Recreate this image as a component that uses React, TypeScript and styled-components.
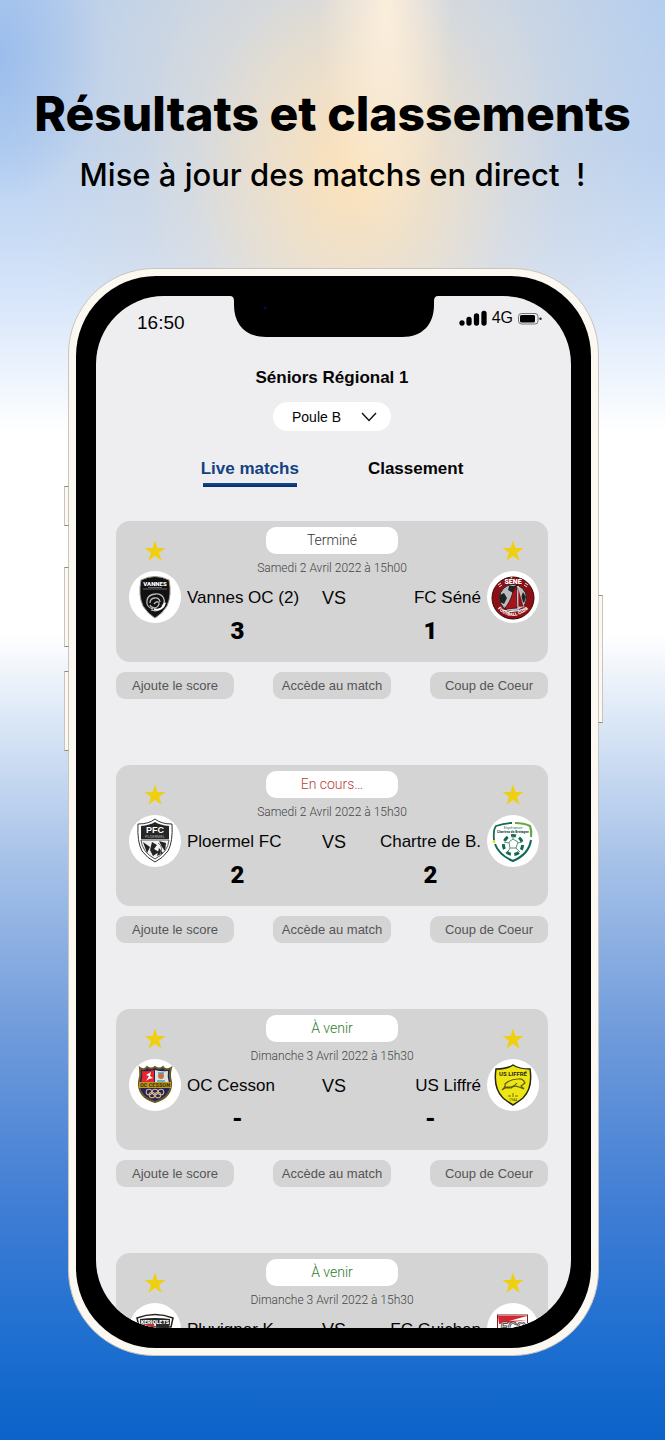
import React from 'react';
import styled, { createGlobalStyle } from 'styled-components';

const SANS = '"Liberation Sans", Arial, Helvetica, sans-serif';
const THIN = 'Roboto, "Liberation Sans", sans-serif';

const GlobalStyle = createGlobalStyle`
  *, *::before, *::after { box-sizing: border-box; }
  body { margin: 0; font-family: ${SANS}; color: #050505; }
  h1, h2, p, ul { margin: 0; padding: 0; }
  button, select { font: inherit; color: inherit; border: 0; margin: 0; padding: 0; cursor: pointer; }
`;

const Page = styled.main`
  min-height: 100vh;
  padding: 86px 0 85px;
  overflow: hidden;
  background:
    radial-gradient(ellipse 16% 10% at 0% 4%, rgba(140, 178, 232, 0.6), transparent),
    radial-gradient(ellipse 10% 16% at 58% 1%, rgba(255, 240, 220, 0.9), transparent),
    radial-gradient(ellipse 32% 18% at 53% 12%, rgba(255, 226, 182, 0.95), rgba(251, 228, 193, 0.6) 40%, rgba(240, 228, 210, 0.2) 75%, transparent),
    radial-gradient(ellipse 52% 26% at 52% 6%, rgba(216, 216, 214, 0.95), rgba(216, 218, 220, 0.7) 50%, transparent),
    linear-gradient(180deg, #b2cdf0 0%, #b6d0f2 10%, #cbddf6 17%, #dce9fb 22%, #fff 30%, #fff 44%, #dbe7f6 50%, #a5c1e8 60%, #6e9adb 72%, #3f7dd4 84%, #1e6fd0 93%, #0b62c8 100%);
`;

const Intro = styled.header`
  display: flex;
  flex-direction: column;
  align-items: center;
  gap: 13px;
  text-align: center;
`;

const Headline = styled.h1`
  font: 800 48px/56px Inter, "Open Sans", sans-serif;
  color: #000;
  white-space: nowrap;
`;

const Tagline = styled.p`
  font: 500 31px/40px Inter, "Open Sans", sans-serif;
  color: #000;
  white-space: pre;
`;

const Phone = styled.section`
  position: relative;
  margin: 73px 66px 0 68px;
  padding: 7px;
  border-radius: 86px;
  background: #fbf8f2;
  border: 1px solid #c9c4bd;
`;

const Bezel = styled.div`
  padding: 20px;
  border-radius: 80px;
  background: #000;
`;

const SideKey = styled.span<{ $side: 'left' | 'right'; $top: number; $length: number }>`
  position: absolute;
  ${({ $side }) => $side}: -5px;
  top: ${({ $top }) => $top}%;
  height: ${({ $length }) => $length}%;
  width: 5px;
  background: #fbf8f2;
  border: 1px solid #c9c4bd;
  border-top-color: #8f8b85;
  border-bottom-color: #8f8b85;
`;

const Screen = styled.div`
  position: relative;
  aspect-ratio: 475 / 1032;
  overflow: hidden;
  border-radius: 68px;
  background: #eeeef0;
`;

const Notch = styled.svg`
  position: absolute;
  top: 0;
  left: 50%;
  width: 208px;
  height: 41px;
  transform: translateX(-50%);
`;

const StatusBar = styled.div`
  display: flex;
  align-items: flex-start;
  justify-content: space-between;
  height: 70px;
  padding: 12px 29px 0 41px;
`;

const Clock = styled.time`
  font-size: 19px;
  line-height: 30px;
`;

const Signals = styled.div`
  display: flex;
  align-items: center;
  gap: 5px;
  font-size: 16px;
  line-height: 20px;
`;

const Toolbar = styled.header`
  display: flex;
  flex-direction: column;
  align-items: center;
  padding-right: 3px;
`;

const Division = styled.h2`
  font-size: 17px;
  line-height: 24px;
`;

const PoolPicker = styled.label`
  position: relative;
  display: block;
  margin-top: 12px;
  svg { position: absolute; right: 13px; top: 9px; pointer-events: none; }
`;

const PoolSelect = styled.select`
  appearance: none;
  display: block;
  width: 118px;
  height: 29px;
  padding: 0 36px 0 19px;
  border-radius: 15px;
  background: #fff;
  font-size: 14px;
  line-height: 28px;
`;

const Tabs = styled.nav`
  display: flex;
  gap: 69px;
  margin-top: 25px;
`;

const Tab = styled.button<{ $active?: boolean }>`
  height: 31px;
  background: linear-gradient(#164a8c, #0a2a6c) center bottom / ${({ $active }) => ($active ? '94px 4px' : '0 0')} no-repeat;
  color: ${({ $active }) => ($active ? '#124282' : '#050505')};
  font-weight: 700;
  font-size: 17px;
  line-height: 26px;
  padding-bottom: 5px;
`;

const MatchList = styled.ul`
  display: flex;
  flex-direction: column;
  gap: 66px;
  margin-top: 34px;
  padding: 0 23px 0 20px;
  list-style: none;
`;

const MatchItem = styled.li`
  display: flex;
  flex-direction: column;
  gap: 10px;
`;

const Card = styled.article`
  display: grid;
  grid-template-columns: 52px 1fr 52px;
  gap: 6px;
  height: 141px;
  padding: 6px 9px 0 13px;
  border-radius: 14px;
  background: #d4d4d5;
`;

const Side = styled.div`
  display: flex;
  flex-direction: column;
  align-items: center;
  gap: 9px;
  padding-top: 13px;
`;

const StarButton = styled.button`
  display: block;
  width: 22px;
  height: 22px;
  background: none;
  svg { display: block; }
`;

const Crest = styled.div`
  width: 52px;
  height: 52px;
  border-radius: 50%;
  background: #fff;
  svg { display: block; width: 52px; height: 52px; }
`;

const Summary = styled.div`
  display: flex;
  flex-direction: column;
  min-width: 0;
`;

const Schedule = styled.div`
  display: flex;
  flex-direction: column;
  align-items: center;
  gap: 5px;
  padding-right: 4px;
`;

const State = styled.span<{ $color: string }>`
  width: 132px;
  border-radius: 10px;
  background: #fff;
  color: ${({ $color }) => $color};
  font: 300 14px/27px ${THIN};
  text-align: center;
`;

const When = styled.time`
  color: #444;
  font: 300 12px/18px ${THIN};
  white-space: nowrap;
`;

const Teams = styled.div`
  display: flex;
  align-items: center;
  margin-top: 9px;
  line-height: 24px;
`;

const Team = styled.span<{ $away?: boolean }>`
  flex: 1 1 0;
  font-size: 17px;
  white-space: nowrap;
  text-align: ${({ $away }) => ($away ? 'right' : 'left')};
`;

const Versus = styled.span`
  font-size: 18px;
`;

const Scores = styled.div`
  display: flex;
  justify-content: space-between;
  margin-top: 7px;
`;

const Score = styled.strong`
  width: 101px;
  color: #000;
  font: 900 24px/28px Roboto, "Liberation Sans", sans-serif;
  text-align: center;
`;

const Actions = styled.div`
  display: flex;
  justify-content: space-between;
`;

const Action = styled.button`
  width: 118px;
  height: 27px;
  border-radius: 9px;
  background: #d4d4d5;
  color: #555;
  font-size: 13px;
  line-height: 27px;
`;

const Star = () => (
  <svg width="22" height="22" viewBox="0 0 22 22" aria-hidden="true">
    <path d="M11 .5 13.5 8H21.500L15.100 12.700 17.500 20.700 11 15.900 4.500 20.700 6.900 12.700.5 8H8.500Z" fill="#efcf12" />
  </svg>
);

const crests: Record<string, React.ReactNode> = {
  vannes: (
    <>
      <path d="M12 9Q26 2 40 9Q43 24 38 35Q33 43 26 47Q19 43 14 35Q9 24 12 9Z" fill="#111" stroke="#9d958c" />
      <text x="26" y="14.500" textAnchor="middle" fontSize="6" fontWeight="900" fill="#fff" fontFamily="Roboto">VANNES</text>
      <path d="M14 18H38M19 16.500H33" stroke="#777" strokeWidth=".8" />
      <path d="M24 38C15 36 16 24 26 23C34 22 38 30 33 35M21 32C21 26 30 25 31 31M25 33C28 29 32 31 29 35C27 38 22 37 21 34M36 31C34 39 28 41 22 39" fill="none" stroke="#bcbcbc" strokeWidth="1.300" />
      <path d="M25 38C31 40 35 36 36 32" fill="none" stroke="#fff" strokeWidth="1.800" />
    </>
  ),
  sene: (
    <>
      <circle cx="26" cy="27" r="21" fill="#8c0f14" stroke="#3c080a" />
      <circle cx="26" cy="27" r="13.500" fill="#b9bdc0" stroke="#222" />
      <path d="M22 15h7l2 3-5 4-5-3ZM13 24l4-2 3 5-3 6-4-2ZM36 21l3 5-2 6-4-3Z" fill="#202326" />
      <path d="M30 13Q29 25 30 37L17 38Q23 32 26 21Z" fill="#a4151b" stroke="#4a080b" strokeWidth=".8" />
      <path d="M31 15L37 36H31Z" fill="#911217" stroke="#eee" strokeWidth=".6" />
      <path d="M16 39Q26 42 37 38" fill="none" stroke="#eee" strokeWidth="1.200" />
      <text x="26" y="12.500" textAnchor="middle" fontSize="7" fontWeight="900" fill="#fff" fontFamily="Roboto">SÉNÉ</text>
      <path id="sene-arc" d="M9 36Q25 54 43 36" fill="none" />
      <text fontSize="4.500" fontWeight="900" fill="#fff" fontFamily="Roboto"><textPath href="#sene-arc" startOffset="50%" textAnchor="middle">FOOTBALL CLUB</textPath></text>
      <path d="M11 14l3-2M12 16l3-2M38 12l3 2M37 14l3 2" stroke="#ddd" />
    </>
  ),
  ploermel: (
    <>
      <path d="M9 9Q20 9 26 4Q32 9 43 9Q44 27 39 36Q34 43 26 47Q18 43 13 36Q8 27 9 9Z" fill="#fff" stroke="#333" />
      <path d="M12 11Q21 10 26 7Q31 10 40 11V24H12Z" fill="#252525" />
      <path d="M12 25Q13 37 26 44Q39 37 40 25Z" fill="#f1f1f1" stroke="#555" />
      <path d="M14 27l7 5-3 6ZM23 27l5 3-3 4 5 3-6 4-3-6ZM30 26l7 2-1 8-3-4ZM30 33l4 5-6 3Z" fill="#222" />
      <path d="M29 28Q35 32 31 39" stroke="#777" fill="none" />
      <text x="26" y="17.500" textAnchor="middle" fontSize="9" fontWeight="900" fill="#fff" fontFamily="Liberation Sans">PFC</text>
      <text x="26" y="22.500" textAnchor="middle" fontSize="4" fill="#aaa" fontFamily="Roboto">PLOERMEL</text>
    </>
  ),
  chartres: (
    <>
      <path d="M9 12Q26 5 43 12Q47 34 26 46Q5 34 9 12Z" fill="#fff" />
      <path d="M7 25Q6 15 9 11Q17 8 25 8" fill="none" stroke="#176952" strokeWidth="1.800" />
      <path d="M28 8Q37 8 43 11Q45 16 44 22" fill="none" stroke="#67a83b" strokeWidth="2.200" />
      <path d="M44 25Q42 39 26 46Q12 40 8 29" fill="none" stroke="#0b6a55" strokeWidth="2" />
      <path d="M7 25v3" stroke="#e8db32" strokeWidth="2.500" />
      <circle cx="26" cy="30" r="9.500" fill="none" stroke="#11674f" strokeWidth="3" strokeDasharray="5 3.500" />
      <path d="M22 27l4-3 5 3-2 6h-6ZM26 20v4M17 27l5 1M35 27l-4 1M23 33l-3 5M29 33l4 4" fill="none" stroke="#44896e" strokeWidth=".9" />
      <text x="26" y="14" textAnchor="middle" fontSize="4" fill="#357564" fontFamily="Roboto">Espérance</text>
      <text x="26" y="18" textAnchor="middle" fontSize="3.300" fontWeight="900" fill="#15594a" fontFamily="Roboto">Chartres de Bretagne</text>
    </>
  ),
  cesson: (
    <>
      <path d="M11 9Q15 12 18 8Q22 11 26 8Q30 11 34 8Q37 12 42 9Q40 16 42 23Q43 38 26 43Q9 38 10 23Q12 16 11 9Z" fill="#23235f" stroke="#6c5a1d" strokeWidth="2" />
      <path d="M13 12Q19 13 25 11V24H12Q14 18 13 12Z" fill="#e8252d" />
      <path d="M26 11Q32 13 39 12Q38 18 40 24H26Z" fill="#dae5d8" />
      <path d="M17 22l3-5-3-1 5-3-1 4 3 2-4 1Z" fill="#fff" />
      <circle cx="32" cy="17" r="3" fill="#ce6b4c" />
      <path d="M28 22h8M29 14h6" stroke="#4b9dae" strokeWidth="1.500" />
      <path d="M10 23H42V29H10Z" fill="#bd9a25" />
      <text x="26" y="28.200" textAnchor="middle" fontSize="5.500" fontWeight="900" fill="#42360d" fontFamily="Roboto">OC CESSON</text>
      <g fill="none" stroke="#d2b37d" strokeWidth="1.100"><circle cx="20" cy="33" r="2.800" /><circle cx="26" cy="33" r="2.800" /><circle cx="32" cy="33" r="2.800" /><circle cx="23" cy="36" r="2.800" /><circle cx="29" cy="36" r="2.800" /></g>
    </>
  ),
  liffre: (
    <>
      <path d="M9 10Q20 10 26 6Q32 10 43 10Q46 29 36 39Q31 43 26 46Q21 43 16 39Q6 29 9 10Z" fill="#eee515" stroke="#272711" strokeWidth="1.500" />
      <text x="26" y="17" textAnchor="middle" fontSize="6" fontWeight="700" fill="#292a13" fontFamily="Roboto">US LIFFRÉ</text>
      <path d="M15 31Q19 28 18 25Q23 20 31 20Q36 19 38 24L34 27L37 30L32 28Q27 26 24 29L18 29ZM18 28Q26 29 30 24" fill="none" stroke="#5d5b14" strokeWidth="1.200" />
      <path d="M21 37h3M28 37h3M26 34v4" stroke="#55520d" strokeWidth=".8" />
      <text x="26" y="42" textAnchor="middle" fontSize="3.500" fill="#45430d" fontFamily="Roboto">1944</text>
    </>
  ),
  pluvigner: (
    <>
      <path d="M8 15Q26 8 44 15L42 24H10Z" fill="#fff" stroke="#222" strokeWidth="1.500" />
      <path d="M11 16Q26 14 41 16V21H11Z" fill="#222" />
      <path d="M11 21h14l2 8H14Z" fill="#ba3435" />
      <path d="M27 21h14l-3 8H27Z" fill="#292929" />
      <text x="26" y="20.500" textAnchor="middle" fontSize="5.500" fontWeight="900" fill="#fff" fontFamily="Roboto">KERIOLETS</text>
    </>
  ),
  guichen: (
    <>
      <rect x="10.500" y="12" width="30" height="28" fill="#fff" stroke="#8e171d" />
      <path d="M11 13H40L22 18L40 17L12 21Z" fill="#d32630" />
      <text x="26" y="28" textAnchor="middle" fontSize="12" fontWeight="900" fontStyle="italic" fill="#ddd" stroke="#333" strokeWidth=".7" fontFamily="Liberation Sans">FCG</text>
    </>
  ),
};

const DONE = '#333';
const LIVE = '#b8413c';
const NEXT = '#2c7d2c';

const matches = [
  { state: 'Terminé', color: DONE, when: 'Samedi 2 Avril 2022 à 15h00', home: 'Vannes OC (2)', away: 'FC Séné', score: ['3', '1'], crests: ['vannes', 'sene'] },
  { state: 'En cours…', color: LIVE, when: 'Samedi 2 Avril 2022 à 15h30', home: 'Ploermel FC', away: 'Chartre de B.', score: ['2', '2'], crests: ['ploermel', 'chartres'] },
  { state: 'À venir', color: NEXT, when: 'Dimanche 3 Avril 2022 à 15h30', home: 'OC Cesson', away: 'US Liffré', score: ['-', '-'], crests: ['cesson', 'liffre'] },
  { state: 'À venir', color: NEXT, when: 'Dimanche 3 Avril 2022 à 15h30', home: 'Pluvigner K.', away: 'FC Guichen', score: ['-', '-'], crests: ['pluvigner', 'guichen'] },
];

const TeamSide = ({ team, crest }: { team: string; crest: string }) => (
  <Side>
    <StarButton aria-label={`Suivre ${team}`}><Star /></StarButton>
    <Crest><svg viewBox="0 0 52 52" aria-hidden="true">{crests[crest]}</svg></Crest>
  </Side>
);

const Match = ({ match }: { match: (typeof matches)[number] }) => (
  <MatchItem>
    <Card>
      <TeamSide team={match.home} crest={match.crests[0]} />
      <Summary>
        <Schedule>
          <State $color={match.color}>{match.state}</State>
          <When>{match.when}</When>
        </Schedule>
        <Teams>
          <Team>{match.home}</Team>
          <Versus>VS</Versus>
          <Team $away>{match.away}</Team>
        </Teams>
        <Scores>
          <Score>{match.score[0]}</Score>
          <Score>{match.score[1]}</Score>
        </Scores>
      </Summary>
      <TeamSide team={match.away} crest={match.crests[1]} />
    </Card>
    <Actions>
      <Action>Ajoute le score</Action>
      <Action>Accède au match</Action>
      <Action>Coup de Coeur</Action>
    </Actions>
  </MatchItem>
);

export default function App() {
  return (
    <>
      <GlobalStyle />
      <Page>
        <Intro>
          <Headline>Résultats et classements</Headline>
          <Tagline>{'Mise à jour des matchs en direct  !'}</Tagline>
        </Intro>
        <Phone>
          <SideKey $side="left" $top={20} $length={3.7} />
          <SideKey $side="left" $top={27.4} $length={7.4} />
          <SideKey $side="left" $top={37} $length={7.4} />
          <SideKey $side="right" $top={30} $length={11.8} />
          <Bezel>
            <Screen>
              <Notch viewBox="0 0 208 41" aria-hidden="true">
                <path d="M0 0Q4 0 4 5V9C4 28 15 41 36 41H172C193 41 204 28 204 9V5Q204 0 208 0Z" fill="#000" />
                <circle cx="35" cy="12" r="1.500" fill="#0a0845" />
              </Notch>
              <StatusBar>
                <Clock>16:50</Clock>
                <Signals>
                  <svg width="28" height="16" viewBox="0 0 28 16" aria-hidden="true">
                    <path d="M3 13v0M10 13v-3.500M17.500 13V6M25 13V3.500" stroke="#000" strokeWidth="5.300" strokeLinecap="round" />
                  </svg>
                  <span>4G</span>
                  <svg width="24" height="13" viewBox="0 0 24 13" aria-hidden="true">
                    <rect x=".5" y="1.500" width="19.500" height="10.500" rx="3" fill="none" stroke="#777" />
                    <rect x="2" y="3" width="15" height="7.500" rx="1.500" fill="#000" />
                    <circle cx="22.500" cy="6.800" r="1.200" fill="#222" />
                  </svg>
                </Signals>
              </StatusBar>
              <Toolbar>
                <Division>Séniors Régional 1</Division>
                <PoolPicker>
                  <PoolSelect aria-label="Poule" defaultValue="B">
                    <option value="B">Poule B</option>
                  </PoolSelect>
                  <svg width="18" height="12" viewBox="0 0 18 12" aria-hidden="true">
                    <path d="M2 2 9 9.500 16 2" fill="none" stroke="#111" strokeWidth="1.400" />
                  </svg>
                </PoolPicker>
                <Tabs>
                  <Tab $active>Live matchs</Tab>
                  <Tab>Classement</Tab>
                </Tabs>
              </Toolbar>
              <MatchList>
                {matches.map((match) => <Match key={match.home} match={match} />)}
              </MatchList>
            </Screen>
          </Bezel>
        </Phone>
      </Page>
    </>
  );
}
